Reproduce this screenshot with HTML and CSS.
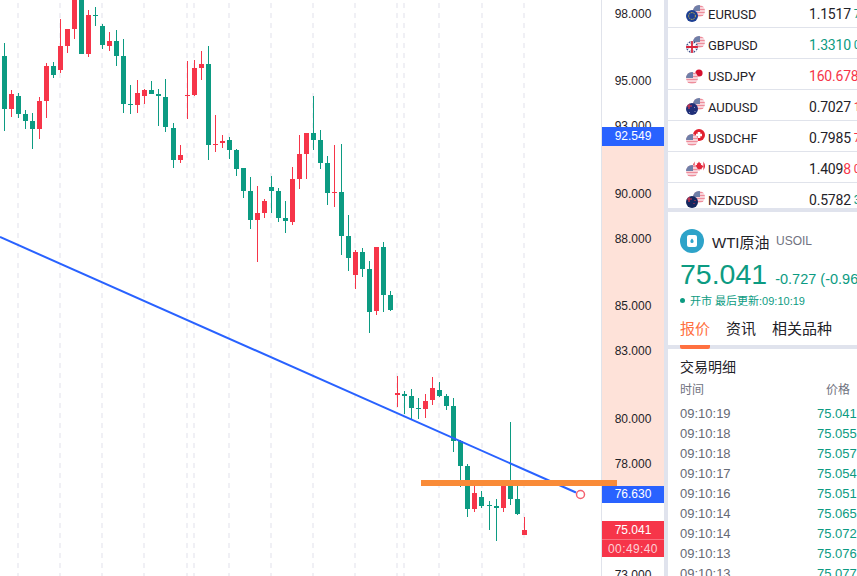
FILE: index.html
```html
<!DOCTYPE html>
<html lang="zh-CN">

<head>
    <meta charset="UTF-8">
    <meta name="viewport" content="width=device-width, initial-scale=1.0">
    <title>USOIL</title>
    <link rel="stylesheet" href="styles.css">
</head>

<body>
    <svg class="flag-defs" width="0" height="0">
        <defs>
            <clipPath id="round"><circle cx="6" cy="6" r="6"></circle></clipPath>
            <g id="us" clip-path="url(#round)">
                <rect width="12" height="12" fill="#fbe9ec"></rect>
                <path d="M0 1.5h12M0 4.5h12M0 7.5h12M0 10.5h12" stroke="#ee8d9b" stroke-width="1.5"></path>
                <rect width="7" height="6" fill="#6f7fa8"></rect>
            </g>
            <g id="eu" clip-path="url(#round)">
                <rect width="12" height="12" fill="#1c3f94"></rect>
                <circle cx="6" cy="6" r="3.4" fill="none" stroke="#e8c93a" stroke-width="1" stroke-dasharray="1 .8"></circle>
            </g>
            <g id="gb" clip-path="url(#round)">
                <rect width="12" height="12" fill="#2a3a7c"></rect>
                <path d="M0 0l12 12M12 0L0 12" stroke="#fff" stroke-width="2"></path>
                <path d="M6 0v12M0 6h12" stroke="#fff" stroke-width="3.4"></path>
                <path d="M6 0v12M0 6h12" stroke="#d8243c" stroke-width="1.8"></path>
            </g>
            <g id="jp" clip-path="url(#round)">
                <rect width="12" height="12" fill="#fff"></rect>
                <circle cx="6" cy="6" r="3.6" fill="#d6102f"></circle>
            </g>
            <g id="au" clip-path="url(#round)">
                <rect width="12" height="12" fill="#1f2f78"></rect>
                <path d="M0 3h6M3 0v6" stroke="#e0374c" stroke-width="1.2"></path>
                <path d="M8.5 4v.5M9 8v.5M3.5 9v.5" stroke="#fff" stroke-width="1"></path>
            </g>
            <g id="nz" clip-path="url(#round)">
                <rect width="12" height="12" fill="#14275f"></rect>
                <path d="M0 3h6M3 0v6" stroke="#e0374c" stroke-width="1.2"></path>
                <path d="M9 4v1M8 7v1" stroke="#e0374c" stroke-width="1"></path>
            </g>
            <g id="ch" clip-path="url(#round)">
                <rect width="12" height="12" fill="#e2202f"></rect>
                <path d="M6 3v6M3 6h6" stroke="#fff" stroke-width="2.6"></path>
            </g>
            <g id="ca" clip-path="url(#round)">
                <rect width="12" height="12" fill="#fff"></rect>
                <path d="M0 0h1.600v12H0zM10.400 0H12v12h-1.600z" fill="#e3263a"></path>
                <path d="M6 1.500l1.200 2 1-.4-.3 2.200 1.300-.6.400 1.300 1 .4-2 1.800.3 1H6.300v1.500h-.6V9.200H3.100l.3-1-2-1.800 1-.4.400-1.300 1.300.6-.3-2.200 1 .4z" fill="#e3263a"></path>
            </g>
        </defs>
    </svg>

    <div class="layout">
        <div class="chart">
            <svg id="plot" class="plot" width="601" height="576"></svg>
        </div>

        <div class="scale" id="scale">
            <div class="scale-band"></div>
            <div class="scale-tag tag-blue tag-top">92.549</div>
            <div class="scale-tag tag-blue tag-line">76.630</div>
            <div class="tag-last">
                <div class="tag-price">75.041</div>
                <div class="tag-count">00:49:40</div>
            </div>
        </div>

        <div class="panel">
            <ul class="pairs">
                <li class="pair">
                    <svg class="flag" viewBox="0 0 19 19"><use href="#us" x="7" y="1"></use><use href="#eu" x="0" y="6"></use></svg>
                    <span class="pair-name">EURUSD</span>
                    <span class="pair-price">1.1517</span><span class="pair-tail up">7</span>
                </li>
                <li class="pair">
                    <svg class="flag" viewBox="0 0 19 19"><use href="#us" x="7" y="1"></use><use href="#gb" x="0" y="6"></use></svg>
                    <span class="pair-name">GBPUSD</span>
                    <span class="pair-price up">1.3310</span><span class="pair-tail up">0</span>
                </li>
                <li class="pair">
                    <svg class="flag" viewBox="0 0 19 19"><use href="#jp" x="7" y="1"></use><use href="#us" x="0" y="6"></use></svg>
                    <span class="pair-name">USDJPY</span>
                    <span class="pair-price down">160.678</span>
                </li>
                <li class="pair">
                    <svg class="flag" viewBox="0 0 19 19"><use href="#us" x="7" y="1"></use><use href="#au" x="0" y="6"></use></svg>
                    <span class="pair-name">AUDUSD</span>
                    <span class="pair-price">0.7027</span><span class="pair-tail down">1</span>
                </li>
                <li class="pair">
                    <svg class="flag" viewBox="0 0 19 19"><use href="#ch" x="7" y="1"></use><use href="#us" x="0" y="6"></use></svg>
                    <span class="pair-name">USDCHF</span>
                    <span class="pair-price">0.7985</span><span class="pair-tail down">7</span>
                </li>
                <li class="pair">
                    <svg class="flag" viewBox="0 0 19 19"><use href="#ca" x="7" y="1"></use><use href="#us" x="0" y="6"></use></svg>
                    <span class="pair-name">USDCAD</span>
                    <span class="pair-price">1.409<span class="down">8</span></span><span class="pair-tail down">0</span>
                </li>
                <li class="pair">
                    <svg class="flag" viewBox="0 0 19 19"><use href="#us" x="7" y="1"></use><use href="#nz" x="0" y="6"></use></svg>
                    <span class="pair-name">NZDUSD</span>
                    <span class="pair-price">0.5782</span><span class="pair-tail up">3</span>
                </li>
            </ul>

            <div class="detail">
                <div class="symbol">
                    <svg class="symbol-icon" viewBox="0 0 24 24">
                        <circle cx="12" cy="12" r="12" fill="#2ea3c9"></circle>
                        <rect x="7" y="6" width="10" height="12" rx="2" fill="#fff"></rect>
                        <path d="M12 9.500c1 1.300 1.600 2 1.600 2.900a1.600 1.600 0 0 1-3.200 0c0-.9.600-1.600 1.600-2.900z" fill="#2ea3c9"></path>
                    </svg>
                    <span class="symbol-name">WTI原油</span>
                    <span class="symbol-code">USOIL</span>
                </div>
                <div class="quote">
                    <span class="quote-last">75.041</span>
                    <span class="quote-change">-0.727 (-0.96%)</span>
                </div>
                <div class="status"><i class="status-dot"></i>开市 最后更新:09:10:19</div>
                <div class="tabs">
                    <span class="tab tab-active">报价</span>
                    <span class="tab">资讯</span>
                    <span class="tab">相关品种</span>
                </div>
                <h3 class="trades-title">交易明细</h3>
                <div class="trades-head"><span>时间</span><span>价格</span></div>
                <div class="trade"><span>09:10:19</span><span class="up">75.041</span></div>
                <div class="trade"><span>09:10:18</span><span class="up">75.055</span></div>
                <div class="trade"><span>09:10:18</span><span class="up">75.057</span></div>
                <div class="trade"><span>09:10:17</span><span class="up">75.054</span></div>
                <div class="trade"><span>09:10:16</span><span class="up">75.051</span></div>
                <div class="trade"><span>09:10:14</span><span class="up">75.065</span></div>
                <div class="trade"><span>09:10:14</span><span class="up">75.072</span></div>
                <div class="trade"><span>09:10:13</span><span class="up">75.076</span></div>
                <div class="trade"><span>09:10:13</span><span class="up">75.077</span></div>
            </div>
        </div>
    </div>

    <script src="chart.js"></script>
</body>

</html>
```

FILE: styles.css
```css
:root {
    --up-color: #0c9b82;
    --down-color: #f63549;
    --blue-color: #2962ff;
    --line-color: #e0e3eb;
    --strip-color: #e0e3ed;
    --text-color: #1f2228;
    --muted-color: #6f7280;
}

* {
    box-sizing: border-box;
}

html,
body {
    height: 100%;
}

body {
    margin: 0;
    overflow: hidden;
    background-color: white;
    color: var(--text-color);
    font-family: "Liberation Sans", "Noto Sans CJK SC", sans-serif;
}

.flag-defs {
    position: absolute;
}

.layout {
    display: flex;
    height: 576px;
    width: 857px;
    overflow: hidden;
}

.chart {
    position: relative;
    z-index: 2;
    width: 601px;
    flex: none;
}

.plot {
    display: block;
    overflow: visible;
}

.candle-up {
    fill: var(--up-color);
}

.candle-down {
    fill: var(--down-color);
}

.grid-line {
    stroke: #f0f0f5;
    stroke-width: 2;
    stroke-dasharray: 5 5;
}

.trend-line {
    stroke: var(--blue-color);
    stroke-width: 2;
}

.trend-end {
    fill: white;
    stroke: #f4606f;
    stroke-width: 1.5;
}

.level-line {
    fill: #f98b38;
}

/* price scale */
.scale {
    position: relative;
    width: 63px;
    flex: none;
    border-left: 1px solid var(--line-color);
    font-size: 12px;
    text-align: center;
}

.scale-band {
    position: absolute;
    top: 146px;
    left: 0;
    right: 0;
    height: 340px;
    background-color: #fee2d9;
}

.scale-tick {
    position: absolute;
    left: 0;
    right: 0;
    height: 16px;
    line-height: 16px;
}

.scale-tag {
    position: absolute;
    left: 0;
    right: 0;
    height: 19px;
    line-height: 19px;
    color: white;
}

.tag-blue {
    background-color: var(--blue-color);
}

.tag-top {
    top: 127px;
}

.tag-line {
    top: 486px;
    height: 17px;
    line-height: 17px;
}

.tag-last {
    position: absolute;
    top: 521px;
    left: 0;
    right: 0;
    height: 36px;
    background-color: var(--down-color);
    color: white;
}

.tag-price {
    height: 18px;
    line-height: 18px;
}

.tag-count {
    height: 18px;
    line-height: 18px;
    border-top: 1px solid #f9707e;
    color: #fdd0d5;
    letter-spacing: 0.4px;
}

/* right panel */
.panel {
    width: 193px;
    flex: none;
    overflow: hidden;
    border-left: 4px solid var(--strip-color);
    white-space: nowrap;
}

.pairs {
    list-style: none;
    margin: -3px 0 0;
    padding: 0;
    height: 215px;
    overflow: hidden;
    border-bottom: 4px solid var(--strip-color);
}

.pair {
    display: flex;
    align-items: center;
    height: 31px;
    padding: 4px 0 0 18px;
    border-bottom: 1px solid var(--line-color);
    font-family: Roboto, "Liberation Sans", sans-serif;
    font-size: 13px;
}

.flag {
    width: 19px;
    height: 19px;
    flex: none;
    margin-top: -2px;
}

.pair-name {
    width: 101px;
    flex: none;
    margin-left: 3px;
}

.pair-price {
    font-size: 14px;
    letter-spacing: -0.2px;
}

.pair-tail {
    margin-left: 3px;
    font-size: 12px;
}

.up {
    color: var(--up-color);
}

.down {
    color: var(--down-color);
}

.detail {
    padding: 17px 0 0 12px;
}

.symbol {
    display: flex;
    align-items: center;
    height: 24px;
}

.symbol-icon {
    width: 24px;
    height: 24px;
    margin-right: 8px;
    flex: none;
}

.symbol-name {
    width: 64px;
    font-size: 15px;
}

.symbol-code {
    font-size: 12px;
    color: var(--muted-color);
}

.quote {
    display: flex;
    align-items: baseline;
    height: 34px;
    margin-top: 4px;
    color: var(--up-color);
}

.quote-last {
    font-size: 28.500px;
    line-height: 34px;
}

.quote-change {
    margin-left: 8px;
    font-size: 14.500px;
}

.status {
    display: flex;
    align-items: center;
    height: 16px;
    margin-top: 1px;
    font-size: 11px;
    color: var(--up-color);
}

.status-dot {
    width: 5px;
    height: 5px;
    margin-right: 5px;
    border-radius: 50%;
    background-color: var(--up-color);
}

.tabs {
    display: flex;
    gap: 16px;
    height: 31px;
    margin-top: 10px;
    margin-left: -12px;
    padding-left: 12px;
    border-bottom: 4px solid var(--strip-color);
    font-size: 15px;
}

.tab {
    height: 31px;
    line-height: 22px;
}

.tab-active {
    color: #ff7040;
    border-bottom: 4px solid #ff7040;
    border-radius: 2px;
}

.trades-title {
    margin: 8px 0 0;
    height: 20px;
    line-height: 20px;
    font-size: 14px;
    font-weight: normal;
}

.trades-head {
    display: flex;
    height: 27px;
    padding-top: 3px;
    font-size: 12px;
    color: var(--muted-color);
}

.trades-head span:first-child {
    width: 146px;
}

.trade {
    display: flex;
    height: 20px;
    line-height: 20px;
    font-size: 13px;
    color: #666a75;
}

.trade span:first-child {
    width: 137px;
    flex: none;
}
```

FILE: chart.js
```js
// candles as [direction, wick top, wick bottom, body top, body bottom]
const segments = [
    {
        x: 4, rows: [
            ['u', 43, 131, 56, 109], ['d', 90, 117, 94, 109], ['u', 93, 118, 96, 114], ['u', 110, 129, 114, 121],
            ['u', 113, 149, 121, 129], ['d', 97, 139, 101, 129], ['d', 63, 118, 66, 101], ['u', 62, 78, 66, 75],
            ['d', 19, 73, 46, 70], ['d', 29, 53, 29, 46], ['d', 0, 39, 0, 29], ['u', 0, 54, 0, 54],
            ['d', 10, 57, 15, 54], ['u', 7, 26, 15, 16], ['u', 24, 49, 26, 45], ['d', 32, 51, 41, 46],
            ['u', 30, 66, 41, 56], ['u', 39, 113, 56, 104], ['u', 85, 114, 104, 105], ['d', 80, 113, 93, 105],
            ['d', 89, 104, 90, 96], ['u', 81, 94, 90, 94], ['u', 89, 126, 94, 96], ['u', 79, 132, 97, 127]
        ]
    },
    {
        x: 173, rows: [
            ['u', 123, 168, 128, 160], ['d', 145, 163, 155, 160], ['d', 61, 119, 95, 96], ['d', 60, 96, 68, 95],
            ['d', 51, 80, 64, 68], ['u', 46, 160, 64, 145], ['d', 115, 152, 144, 145], ['d', 135, 148, 141, 143],
            ['u', 137, 159, 140, 150], ['u', 149, 176, 150, 169], ['u', 168, 198, 168, 191], ['u', 177, 229, 191, 220],
            ['d', 186, 262, 213, 220], ['d', 199, 218, 201, 213], ['u', 176, 213, 187, 191], ['u', 188, 222, 191, 218],
            ['u', 201, 233, 218, 221], ['d', 167, 225, 179, 222], ['d', 135, 189, 154, 179], ['d', 133, 179, 133, 154],
            ['u', 96, 150, 133, 140], ['u', 130, 169, 140, 163], ['u', 156, 205, 163, 193], ['d', 145, 207, 192, 193],
            ['u', 144, 255, 192, 236], ['u', 215, 271, 236, 258], ['d', 250, 289, 252, 275], ['u', 248, 277, 252, 269],
            ['u', 261, 333, 269, 312], ['d', 247, 315, 247, 311], ['u', 242, 312, 247, 295], ['u', 291, 311, 295, 310]
        ]
    },
    {
        x: 397, rows: [
            ['d', 376, 407, 393, 395], ['u', 391, 414, 394, 396], ['u', 389, 419, 396, 408], ['u', 398, 419, 408, 409],
            ['d', 394, 418, 401, 409], ['d', 377, 405, 388, 400], ['u', 382, 397, 390, 396], ['u', 394, 410, 396, 406],
            ['u', 398, 452, 406, 441], ['u', 440, 487, 441, 466], ['u', 464, 517, 466, 509], ['d', 485, 512, 493, 509],
            ['u', 491, 508, 497, 506]
        ]
    },
    {
        x: 489, rows: [
            ['u', 501, 530, 505, 506], ['u', 499, 541, 506, 508], ['d', 485, 512, 485, 508], ['u', 422, 505, 485, 499],
            ['u', 485, 515, 499, 514], ['d', 517, 535, 530, 535]
        ]
    }
];

const gridLines = [18, 60, 102, 144, 187, 194, 229, 271, 313, 355, 397, 404, 439, 482, 524];
const ticks = [
    ['98.000', 14], ['95.000', 81], ['93.000', 126], ['90.000', 194], ['88.000', 239],
    ['85.000', 306], ['83.000', 351], ['80.000', 419], ['78.000', 464], ['73.000', 575]
];

const plot = document.getElementById('plot');
const scale = document.getElementById('scale');

function add(name, attrs) {
    const el = document.createElementNS('http://www.w3.org/2000/svg', name);
    for (const key in attrs) {
        el.setAttribute(key, attrs[key]);
    }
    plot.appendChild(el);
}

gridLines.forEach(function (x) {
    add('line', { x1: x, x2: x, y1: 3, y2: 576, class: 'grid-line' });
});

segments.forEach(function (segment) {
    segment.rows.forEach(function (row, i) {
        const x = segment.x + i * 7;
        const cls = row[0] === 'u' ? 'candle-up' : 'candle-down';
        add('rect', { x: x, y: row[1], width: 1, height: row[2] - row[1], class: cls });
        add('rect', { x: x - 2, y: row[3], width: 5, height: row[4] - row[3], class: cls });
    });
});

add('line', { x1: 0, y1: 237, x2: 576, y2: 492.500, class: 'trend-line' });
add('rect', { x: 421, y: 480, width: 196, height: 6, class: 'level-line' });
add('circle', { cx: 580.500, cy: 494.500, r: 4, class: 'trend-end' });

ticks.forEach(function (tick) {
    const el = document.createElement('div');
    el.className = 'scale-tick';
    el.textContent = tick[0];
    el.style.top = (tick[1] - 8) + 'px';
    scale.insertBefore(el, scale.children[1]);
});
```
